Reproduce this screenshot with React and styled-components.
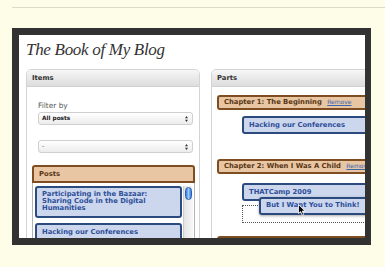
import { createGlobalStyle, styled } from "styled-components";

const sans = `"DejaVu Sans", Verdana, sans-serif`;

const GlobalStyle = createGlobalStyle`
  body {
    margin: 0;
    background: #fefde8;
  }
`;

const Page = styled.div`
  width: 385px;
  height: 267px;
  overflow: hidden;
  padding-top: 7px;
  box-sizing: border-box;
`;

const Rule = styled.div`
  margin-left: 12px;
  height: 1px;
  background: #dcdbc9;
`;

const Frame = styled.div`
  margin: 20px 0 0 12px;
  width: 359px;
  height: 217px;
  box-sizing: border-box;
  background: #323232;
  padding: 7px 6px 7px 7px;
`;

const Screen = styled.div`
  position: relative;
  height: 100%;
  background: #fff;
  overflow: hidden;
  padding-left: 7px;
  box-sizing: border-box;
`;

const Title = styled.h1`
  margin: 0;
  padding-top: 5px;
  font: italic 400 17px/20px "Liberation Serif", "Times New Roman", serif;
  letter-spacing: -0.3px;
  color: #333;
`;

const Columns = styled.div`
  margin-top: 9px;
  display: flex;
  gap: 11px;
  align-items: flex-start;
`;

const Panel = styled.section`
  flex: 0 0 ${(p) => p.$width}px;
  height: 200px;
  border: 1px solid #d4d4d4;
  border-radius: 5px 5px 0 0;
  overflow: hidden;
  box-sizing: border-box;
`;

const PanelHeader = styled.div`
  height: 16px;
  padding-left: 5px;
  background: linear-gradient(#f6f6f6, #dddddd);
  border-bottom: 1px solid #d0d0d0;
  font: 700 6.8px/16px ${sans};
  color: #333;
`;

const ItemsBody = styled.div`
  padding: 0 4px 0 5px;
`;

const FilterGroup = styled.div`
  padding: 14px 2px 0 6px;
`;

const FilterLabel = styled.div`
  font: 400 7.4px/9px ${sans};
  color: #555;
`;

const Select = styled.div`
  display: flex;
  align-items: center;
  justify-content: space-between;
  height: 13px;
  margin-top: ${(p) => p.$top}px;
  padding: 0 4px 0 3px;
  box-sizing: border-box;
  border: 1px solid #cfcfcf;
  border-radius: 3px;
  background: linear-gradient(#ffffff, #ececec);
  font: 700 5.8px/11px ${sans};
  color: ${(p) => (p.$muted ? "#999" : "#222")};
`;

const Arrows = () => (
  <svg width="3" height="6" viewBox="0 0 3 6">
    <path d="M1.5 0 L3 2.3 L0 2.3 Z M0 3.7 L3 3.7 L1.5 6 Z" fill="#333" />
  </svg>
);

const TanBar = styled.div`
  height: ${(p) => p.$h}px;
  box-sizing: border-box;
  border: 2px solid #7e4e22;
  border-radius: ${(p) => (p.$top ? "3px 3px 0 0" : "3px")};
  background: #e8c5a3;
  padding-left: 5px;
  font: 700 6.8px/${(p) => p.$h - 4}px ${sans};
  color: #583614;
  white-space: nowrap;
  margin-top: ${(p) => p.$mt || 0}px;
`;

const RemoveLink = styled.a`
  margin-left: 3px;
  font: 400 6px ${sans};
  color: #3a66b0;
  text-decoration: underline;
`;

const PostsList = styled.div`
  display: grid;
  grid-template-columns: 1fr 10px;
  gap: 1px;
  height: 60px;
  padding: 3px 1px 0 2px;
  border-left: 1px solid #b4b4b4;
  border-right: 1px solid #b4b4b4;
`;

const PostStack = styled.div`
  display: flex;
  flex-direction: column;
  gap: 5px;
`;

const BlueItem = styled.div`
  box-sizing: border-box;
  min-height: 18px;
  border: 2px solid #2b4a7d;
  border-radius: 3px;
  background: #ccd6ec;
  padding: ${(p) => (p.$multi ? "3px 5px 4px" : "0 5px")};
  font: 700 6.8px/${(p) => (p.$multi ? "7px" : "14px")} ${sans};
  color: #2d4f99;
  white-space: ${(p) => (p.$multi ? "normal" : "nowrap")};
  ${(p) => p.$dragging && "box-shadow: 0 1px 3px rgba(0,0,0,0.35);"}
`;

const ScrollTrack = styled.div`
  background: linear-gradient(90deg, #e4e4e4, #f8f8f8);
  border-left: 1px solid #cccccc;
  padding: 1px 1px 0;
`;

const ScrollThumb = styled.div`
  height: 13px;
  border-radius: 4px;
  border: 1px solid #2a5fb0;
  background: linear-gradient(90deg, #2f7ae0, #9ccaf6 50%, #2f7ae0);
  box-sizing: border-box;
`;

const PartsBody = styled.div`
  padding: 8px 0 0 5px;
`;

const Children = styled.div`
  padding: ${(p) => p.$top}px 0 ${(p) => p.$bottom}px 25px;
  display: flex;
  flex-direction: column;
  gap: 4px;
`;

const Placeholder = styled.div`
  position: relative;
  height: 16px;
  border: 1px dotted #555;
  border-right: none;
`;

const Dragged = styled(BlueItem)`
  position: absolute;
  left: 16px;
  top: -9px;
  width: 160px;
  height: 17px;
  line-height: 13px;
`;

const Cursor = styled.svg`
  position: absolute;
  left: 55px;
  top: -2px;
`;

export default function App() {
  return (
    <Page>
      <GlobalStyle />
      <Rule />
      <Frame>
        <Screen>
          <Title>The Book of My Blog</Title>
          <Columns>
            <Panel $width={174}>
              <PanelHeader>Items</PanelHeader>
              <ItemsBody>
                <FilterGroup>
                  <FilterLabel>Filter by</FilterLabel>
                  <Select $top={2}>
                    All posts <Arrows />
                  </Select>
                  <Select $top={15} $muted>
                    - <Arrows />
                  </Select>
                </FilterGroup>
                <TanBar $h={18} $mt={12} $top>
                  Posts
                </TanBar>
                <PostsList>
                  <PostStack>
                    <BlueItem $multi>
                      Participating in the Bazaar: Sharing Code in the Digital
                      Humanities
                    </BlueItem>
                    <BlueItem>Hacking our Conferences</BlueItem>
                  </PostStack>
                  <ScrollTrack>
                    <ScrollThumb />
                  </ScrollTrack>
                </PostsList>
              </ItemsBody>
            </Panel>
            <Panel $width={220}>
              <PanelHeader>Parts</PanelHeader>
              <PartsBody>
                <TanBar $h={15}>
                  Chapter 1: The Beginning <RemoveLink>Remove</RemoveLink>
                </TanBar>
                <Children $top={6} $bottom={25}>
                  <BlueItem>Hacking our Conferences</BlueItem>
                </Children>
                <TanBar $h={15}>
                  Chapter 2: When I Was A Child <RemoveLink>Remove</RemoveLink>
                </TanBar>
                <Children $top={9} $bottom={13}>
                  <BlueItem>THATCamp 2009</BlueItem>
                  <Placeholder>
                    <Dragged $dragging>But I Want You to Think!</Dragged>
                    <Cursor width="8" height="12" viewBox="0 0 8 12">
                      <path
                        d="M0.5 0.5 L0.5 9.5 L2.6 7.6 L4.2 11.2 L5.7 10.5 L4.2 7.1 L7 7.1 Z"
                        fill="#000"
                        stroke="#fff"
                        strokeWidth="0.8"
                      />
                    </Cursor>
                  </Placeholder>
                </Children>
                <TanBar $h={15} />
              </PartsBody>
            </Panel>
          </Columns>
        </Screen>
      </Frame>
    </Page>
  );
}
